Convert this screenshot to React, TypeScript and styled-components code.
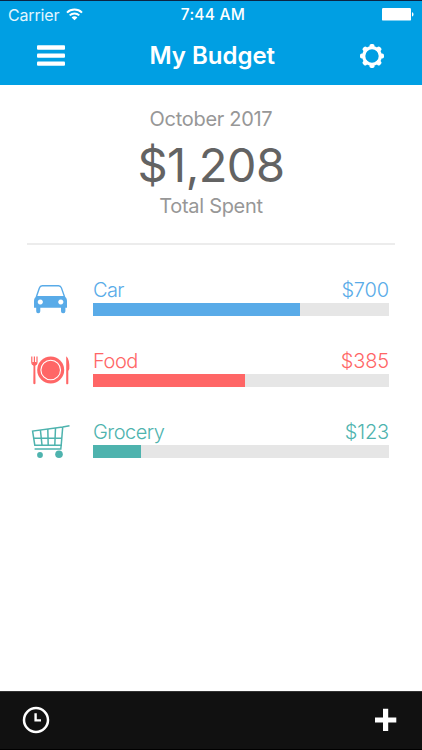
import React from "react";
import styled, { createGlobalStyle } from "styled-components";

const GlobalStyle = createGlobalStyle`
  * { box-sizing: border-box; }
  body { margin: 0; background: #fff; font-family: Inter, "Liberation Sans", sans-serif; }
  svg { display: block; flex: none; }
`;

const Screen = styled.div`
  width: 422px;
  height: 750px;
  display: flex;
  flex-direction: column;
  overflow: hidden;
  background: #fff;
`;

const Header = styled.header`
  height: 85px;
  background: #009fe3;
  border-top: 1px solid #0b2545;
  color: #fff;
`;

const StatusBar = styled.div`
  height: 28px;
  display: grid;
  grid-template-columns: 1fr auto 1fr;
  align-items: center;
  padding: 0 8px 0 8px;
  font-size: 16px;
  line-height: 28px;
`;

const Carrier = styled.div`
  display: flex;
  align-items: center;
  gap: 7px;
  letter-spacing: -0.15px;
  color: #e2f6ff;
`;

const Clock = styled.div`
  font-size: 15.5px;
  font-weight: 500;
  letter-spacing: 0.25px;
  padding-left: 4px;
`;

const BatterySlot = styled.div`
  display: flex;
  justify-content: flex-end;
  padding-bottom: 2px;
`;

const NavBar = styled.div`
  height: 54px;
  display: grid;
  grid-template-columns: 32px 1fr 28px;
  align-items: center;
  padding: 0 36.5px 0 35px;
`;

const Title = styled.h1`
  margin: 0;
  font-size: 24px;
  line-height: 54px;
  font-weight: 600;
  letter-spacing: 0;
  text-align: center;
`;

const Summary = styled.section`
  margin: 0 27px;
  height: 160px;
  padding-top: 20px;
  border-bottom: 2px solid #ececec;
  display: flex;
  flex-direction: column;
  align-items: center;
`;

const Caption = styled.div`
  font-size: 20px;
  line-height: 28px;
  color: #979797;
  letter-spacing: -0.3px;
`;

const Total = styled.div`
  height: 59px;
  font-size: 47px;
  line-height: 63px;
  color: #636363;
  letter-spacing: -0.5px;
`;

const Categories = styled.main`
  flex: 1;
  padding: 32px 33px 0 27px;
  display: flex;
  flex-direction: column;
  gap: 31px;
`;

const CategoryRow = styled.div<{ $color: string }>`
  height: 40px;
  display: grid;
  grid-template-columns: 48px 1fr;
  column-gap: 18px;
  color: ${(p) => p.$color};
`;

const Details = styled.div`
  display: flex;
  flex-direction: column;
`;

const Labels = styled.div`
  height: 26px;
  display: flex;
  justify-content: space-between;
  font-size: 20px;
  font-weight: 350;
  line-height: 26px;
`;

const Label = styled.span<{ $spacing: number }>`
  letter-spacing: ${(p) => p.$spacing}px;
`;

const Track = styled.div`
  height: 13px;
  background: #e6e6e6;
`;

const Fill = styled.div`
  height: 100%;
  background: currentColor;
`;

const Footer = styled.footer`
  height: 59px;
  padding: 0 24px 1px 22px;
  display: flex;
  align-items: center;
  justify-content: space-between;
  background: #111;
  border-top: 1px solid #333;
  border-bottom: 1px solid #000;
`;

const WifiIcon = () => (
  <svg width="17" height="15" viewBox="0 0 17 15" fill="none" stroke="#fff" strokeWidth="2">
    <path d="M1 4.6C5.2.6 11.8.6 16 4.6M3.7 7.4c2.7-2.6 6.9-2.6 9.6 0" />
    <path d="M5.6 9.4c1.6-1.5 4.2-1.5 5.8 0L8.5 12.3z" fill="#fff" stroke="none" />
  </svg>
);

const BatteryIcon = () => (
  <svg width="32" height="13" viewBox="0 0 32 13" fill="#fff">
    <rect x="0" y="0" width="29" height="12.6" rx="1.2" />
    <path d="M30 4.2c2 .5 2 3.7 0 4.2z" />
  </svg>
);

const MenuIcon = () => (
  <svg width="32" height="24" viewBox="0 0 32 24" fill="#fff">
    <rect x="2" y="1.3" width="28" height="4.4" rx="1" />
    <rect x="2" y="9.4" width="28" height="4.4" rx="1" />
    <rect x="2" y="17.4" width="28" height="4.4" rx="1" />
  </svg>
);

const GearIcon = () => (
  <svg width="28" height="28" viewBox="-14 -14 28 28">
    <circle r="8.3" fill="none" stroke="#fff" strokeWidth="3.2" />
    {[0, 45, 90, 135, 180, 225, 270, 315].map((a) => (
      <rect key={a} x="-2.5" y="-12" width="5" height="5" rx="1.8" fill="#fff" transform={`rotate(${a})`} />
    ))}
  </svg>
);

const CarIcon = () => (
  <svg width="48" height="40" viewBox="0 0 48 40" fill="currentColor">
    <path d="M9.3 20 12.4 10.9Q13.1 8.8 15.2 8.8H31.6Q33.7 8.8 34.4 10.9L37.6 20" fill="none" stroke="currentColor" strokeWidth="1.4" />
    <path
      fillRule="evenodd"
      d="M10 19H37Q40 20.5 40 24V30.8H38.4V34.3Q38.4 36.2 36.4 36.2H36Q34 36.2 34 34.3V30.8H13.3V34.3Q13.3 36.2 11.4 36.2H11Q9.2 36.2 9.2 34.3V30.8H7V24Q7 20.5 10 19ZM13.3 22.4a2.6 2.6 0 1 0 .01 0ZM33.8 22.4a2.6 2.6 0 1 0 .01 0Z"
    />
  </svg>
);

const FoodIcon = () => (
  <svg width="48" height="40" viewBox="0 0 48 40" fill="currentColor">
    <circle cx="23.7" cy="22" r="13.5" />
    <circle cx="23.7" cy="22" r="9.8" fill="none" stroke="#fff" strokeWidth="1.1" />
    <path d="M4.8 8.6V14Q4.8 17 7.4 17Q10 17 10 14V8.6M7.4 8.6V17" fill="none" stroke="currentColor" strokeWidth="1.2" />
    <path d="M5 14H9.8L8.3 18 8.5 35.5Q7.4 36.8 6.3 35.5L6.5 18Z" />
    <path d="M39.2 8.2Q42.8 11 42.3 21L41.3 23V35.8Q40 36.8 39.2 35.8Z" />
  </svg>
);

const CartIcon = () => (
  <svg width="48" height="40" viewBox="0 0 48 40" fill="none" stroke="currentColor" strokeWidth="1.5">
    <path d="M42.5 6.8 35.7 8.1 5.6 12.1 7.8 26.2H34.2L35.7 8.1" />
    <path d="M6.6 19.2H34.8M13.4 11 15 26.2M20.8 10 21.2 26.2M28.5 9 27.8 26.2" />
    <path d="M34.2 26 33.8 30.1H7.6" />
    <circle cx="13" cy="36" r="2.9" fill="currentColor" stroke="none" />
    <circle cx="32" cy="35.3" r="3.8" fill="currentColor" stroke="none" />
  </svg>
);

const HistoryIcon = () => (
  <svg width="28" height="28" viewBox="0 0 28 28" fill="none" stroke="#fff">
    <circle cx="14" cy="14" r="12" strokeWidth="2.5" />
    <path d="M13.6 7.3V14.4H19" strokeWidth="2.4" />
  </svg>
);

const PlusIcon = () => (
  <svg width="24" height="24" viewBox="0 0 24 24" fill="#fff">
    <path d="M9 .8h5.2v8.8h8.1v5h-8.1V23H9v-8.4H1v-5h8z" />
  </svg>
);

const categories = [
  { name: "Car", amount: "$700", color: "#59abe8", percent: 70, spacing: -0.6, amountSpacing: -0.15, Icon: CarIcon },
  { name: "Food", amount: "$385", color: "#ff6666", percent: 51.2, spacing: -0.45, amountSpacing: -0.15, Icon: FoodIcon },
  { name: "Grocery", amount: "$123", color: "#4eb3ae", percent: 16.3, spacing: -0.5, amountSpacing: -0.15, Icon: CartIcon },
];

export default function App() {
  return (
    <>
      <GlobalStyle />
      <Screen>
        <Header>
          <StatusBar>
            <Carrier>Carrier<WifiIcon /></Carrier>
            <Clock>7:44 AM</Clock>
            <BatterySlot><BatteryIcon /></BatterySlot>
          </StatusBar>
          <NavBar>
            <MenuIcon />
            <Title>My Budget</Title>
            <GearIcon />
          </NavBar>
        </Header>
        <Summary>
          <Caption>October 2017</Caption>
          <Total>$1,208</Total>
          <Caption>Total Spent</Caption>
        </Summary>
        <Categories>
          {categories.map(({ name, amount, color, percent, spacing, amountSpacing, Icon }) => (
            <CategoryRow key={name} $color={color}>
              <Icon />
              <Details>
                <Labels>
                  <Label $spacing={spacing}>{name}</Label>
                  <Label $spacing={amountSpacing}>{amount}</Label>
                </Labels>
                <Track><Fill style={{ width: `${percent}%` }} /></Track>
              </Details>
            </CategoryRow>
          ))}
        </Categories>
        <Footer>
          <HistoryIcon />
          <PlusIcon />
        </Footer>
      </Screen>
    </>
  );
}
